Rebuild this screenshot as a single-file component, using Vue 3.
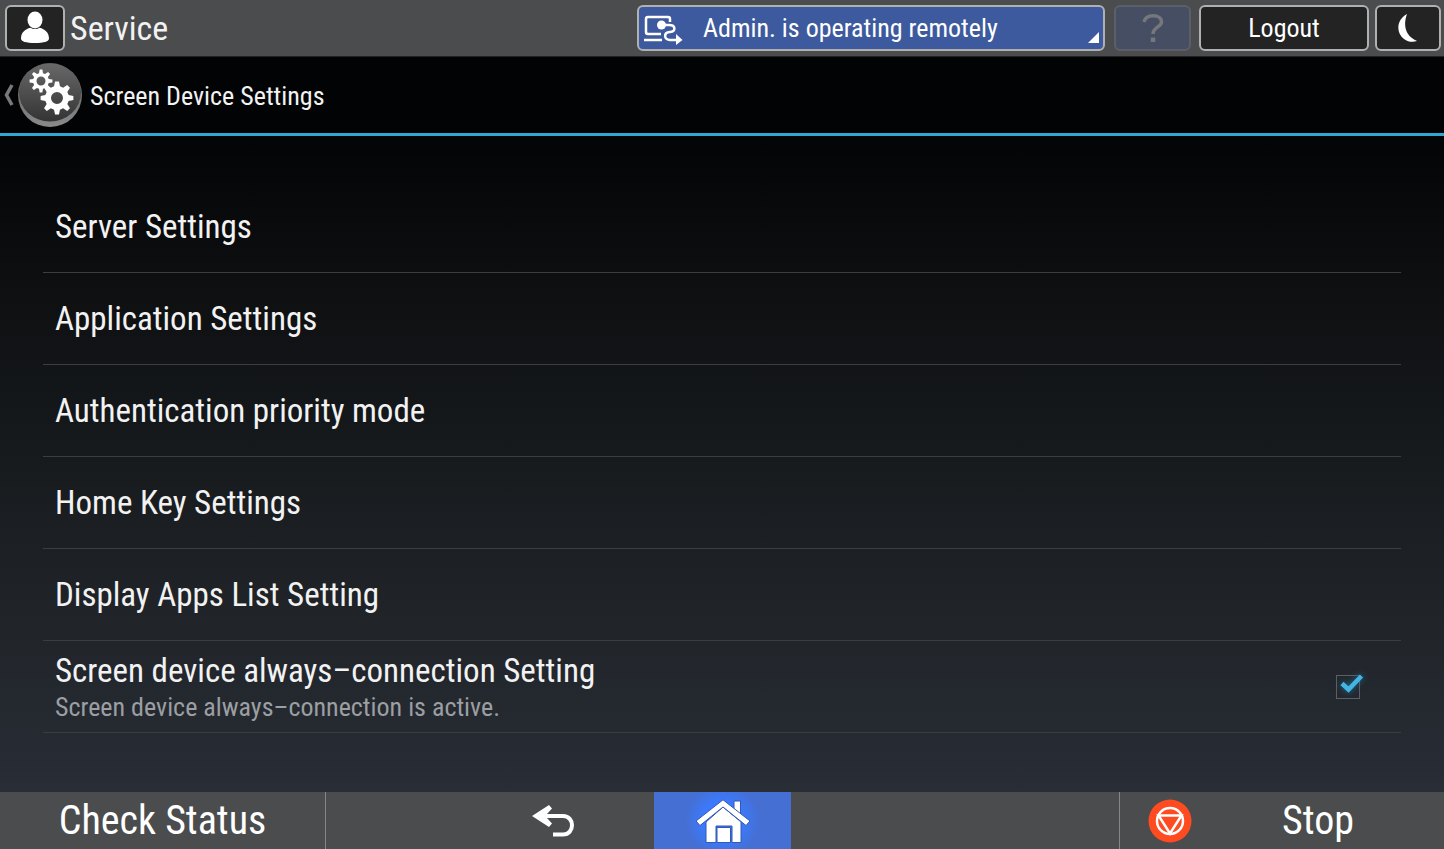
<template>
  <div class="panel">
    <header class="top-bar">
      <button type="button" class="key user-key" aria-label="User">
        <svg width="30" height="34" viewBox="0 0 30 34" fill="#fff">
          <ellipse cx="15" cy="9" rx="7.5" ry="8.5" />
          <path d="M15 18c2 0 3.200-.6 4.500-1.300C25 18 29 21.500 29 27.500C29 30.500 24 32 15 32S1 30.500 1 27.500C1 21.500 5 18 10.500 16.700C11.800 17.400 13 18 15 18z" />
        </svg>
      </button>
      <span class="user-name">Service</span>
      <button type="button" class="key remote-key">
        <svg class="remote-icon" width="40" height="34" viewBox="0 0 40 34" fill="none" stroke="#fff" stroke-width="2.500">
          <path d="M18 23H5Q3 23 3 21V8Q3 6 5 6H25Q27 6 27 8V11" />
          <path d="M1 29H19" />
          <path d="M18 14H26C33 14 33 20.500 27 21C20 21.500 21 29 27 29H34" />
          <circle cx="18.500" cy="14" r="4.500" fill="#fff" stroke="none" />
          <path d="M33 23L39.500 29L33 34z" fill="#fff" stroke="none" />
        </svg>
        <span class="remote-text">Admin. is operating remotely</span>
        <svg class="remote-corner" width="11" height="11" viewBox="0 0 11 11" fill="#fff"><path d="M11 0V11H0z" /></svg>
      </button>
      <button type="button" class="key help-key" disabled aria-label="Help">
        <svg width="22" height="28" viewBox="0 0 22 28" fill="none" stroke="#75777c" stroke-width="3.500">
          <path d="M2 8C3 3.500 6.500 1.800 11 1.800C16 1.800 19.500 4 19.500 8C19.500 13 11 13 11 20" />
          <path d="M11 23.500V28" stroke-width="4.500" />
        </svg>
      </button>
      <button type="button" class="key logout-key">Logout</button>
      <button type="button" class="key sleep-key" aria-label="Sleep">
        <svg width="20" height="30" viewBox="0 0 20 30" fill="#fff">
          <path d="M9 1C-2 7 -2 20 6 26C10 29 15 29.500 19 28C7 23 5 12 9 1z" />
        </svg>
      </button>
    </header>

    <nav class="title-bar">
      <a href="#" class="back-link" aria-label="Back to settings">
        <svg width="10" height="22" viewBox="0 0 10 22" fill="none" stroke="#77797a" stroke-width="3.500">
          <path d="M8 1L2.500 11L8 21" />
        </svg>
        <svg width="66" height="66" viewBox="0 0 66 66">
          <defs>
            <linearGradient id="disc" x1="0" y1="0" x2="0" y2="1">
              <stop offset="0" stop-color="#686868" />
              <stop offset="1" stop-color="#343434" />
            </linearGradient>
            <linearGradient id="rim" x1="0" y1="0" x2="0" y2="1">
              <stop offset="0" stop-color="#555" />
              <stop offset="1" stop-color="#8a8a8a" />
            </linearGradient>
          </defs>
          <circle cx="33" cy="33" r="32" fill="url(#rim)" />
          <ellipse cx="33" cy="30.500" rx="31" ry="29" fill="url(#disc)" />
          <path v-for="gear in gears" :key="gear" :d="gear" fill="#fff" fill-rule="evenodd" />
        </svg>
      </a>
      <h1 class="title">Screen Device Settings</h1>
    </nav>

    <main class="content">
      <ul class="settings">
        <li v-for="item in items" :key="item" class="row">
          <a href="#" class="row-link">{{ item }}</a>
        </li>
        <li class="row">
          <label class="row-text" for="always-connection">
            <span class="row-name">Screen device always–connection Setting</span>
            <span class="row-note">Screen device always–connection is {{ connected ? 'active' : 'inactive' }}.</span>
          </label>
          <span class="check">
            <input id="always-connection" v-model="connected" type="checkbox" class="check-box" />
            <svg v-if="connected" class="check-mark" width="24" height="20" viewBox="0 0 24 20" fill="none" stroke="#42b5e4" stroke-width="4.500">
              <path d="M2 9.500L8.500 15.500L21.500 2" />
            </svg>
          </span>
        </li>
      </ul>
    </main>

    <footer class="bottom-bar">
      <button type="button" class="bar-key status-key">Check Status</button>
      <div class="bar-middle">
        <button type="button" class="bar-key return-key" aria-label="Return">
          <svg width="44" height="34" viewBox="0 0 44 34">
            <path d="M15 12H32C44 12 44 30.500 32 30.500H22" fill="none" stroke="#fff" stroke-width="4" />
            <path d="M1 12L18 1L21 4.500L16 10V14L21 19.500L18 23z" fill="#fff" />
          </svg>
        </button>
        <button type="button" class="bar-key home-key" aria-label="Home">
          <svg width="54" height="44" viewBox="0 0 54 44" fill="#fff" stroke="#3158b5" stroke-width="1">
            <path d="M38 13V2H44.500V18.500z" />
            <path d="M10 23L27 8L45 23V43.500H36V27H20V43.500H10z" />
            <path d="M27 .8L54 22L50 26.500L27 8L4 26.500L0 22z" />
            <path d="M21 28.500H34.500V43.500H21z" />
          </svg>
        </button>
      </div>
      <button type="button" class="bar-key stop-key">
        <svg width="44" height="44" viewBox="0 0 44 44" fill="none" stroke="#fff" stroke-width="2.500">
          <circle cx="22" cy="22" r="21.500" fill="#ff4b20" stroke="none" />
          <circle cx="22" cy="22" r="13" />
          <path d="M10.500 16.500H33.500L22 34.500z" />
        </svg>
        <span class="stop-text">Stop</span>
      </button>
    </footer>
  </div>
</template>

<script setup>
import { ref } from 'vue'

const connected = ref(true)

const items = [
  'Server Settings',
  'Application Settings',
  'Authentication priority mode',
  'Home Key Settings',
  'Display Apps List Setting'
]

// eight-toothed wheel with a round hole
function gearPath(cx, cy, outer, root, hole) {
  const points = []
  for (let i = 0; i < 8; i++) {
    const steps = [[-0.25, root], [-0.12, outer], [0.12, outer], [0.25, root]]
    for (const [offset, r] of steps) {
      const a = (i * Math.PI) / 4 + offset
      points.push(`${(cx + r * Math.cos(a)).toFixed(2)} ${(cy + r * Math.sin(a)).toFixed(2)}`)
    }
  }
  const ring = `M${cx - hole} ${cy}a${hole} ${hole} 0 1 0 ${hole * 2} 0a${hole} ${hole} 0 1 0 ${-hole * 2} 0z`
  return `M${points.join('L')}z${ring}`
}

const gears = [
  gearPath(24, 19, 11.5, 8, 4.5),
  gearPath(40, 36, 16.5, 12, 6)
]
</script>

<style>
body {
  margin: 0;
  background: #282d36;
}
</style>

<style scoped>
.panel {
  display: flex;
  flex-direction: column;
  min-height: 100vh;
  box-sizing: border-box;
  color: #f2f2f2;
  font-family: "Roboto Condensed", Roboto, sans-serif;
}

button {
  font-family: inherit;
  color: #fff;
  padding: 0;
  cursor: pointer;
}

svg {
  display: block;
  flex: none;
}

.top-bar {
  display: flex;
  align-items: center;
  height: 56px;
  padding: 0 3px 0 5px;
  background: #4b4c4d;
  border-bottom: 1px solid #222;
}

.key {
  display: flex;
  align-items: center;
  justify-content: center;
  box-sizing: border-box;
  height: 46px;
  border: 2px solid #b0b0b0;
  border-radius: 6px;
  background: #232323;
  font-size: 26px;
}

.user-key {
  width: 60px;
}

.user-name {
  margin-left: 5px;
  margin-right: auto;
  font-size: 34px;
}

.remote-key {
  position: relative;
  width: 468px;
  padding-left: 4px;
  justify-content: flex-start;
  background: #3d5a9e;
}

.remote-text {
  margin-left: 20px;
}

.remote-corner {
  position: absolute;
  right: 4px;
  bottom: 6px;
}

.help-key {
  width: 77px;
  margin-left: 9px;
  border-color: #5b6068;
  background: #464e63;
}

.logout-key {
  width: 170px;
  margin-left: 8px;
}

.sleep-key {
  width: 66px;
  margin-left: 6px;
}

.title-bar {
  display: flex;
  align-items: center;
  height: 76px;
  padding-left: 4px;
  background: #020304;
  border-bottom: 3px solid #2fa8d4;
}

.back-link {
  display: flex;
  align-items: center;
  gap: 3px;
}

.title {
  margin: 0 0 0 7px;
  padding-top: 2px;
  font-size: 26px;
  font-weight: 400;
}

.content {
  flex: 1;
  padding: 45px 43px 58px;
  background: linear-gradient(#030405, #0e1012 25%, #1f2327 70%, #282d36);
}

.settings {
  margin: 0;
  padding: 0;
  list-style: none;
}

.row {
  display: flex;
  align-items: center;
  justify-content: space-between;
  height: 91px;
  border-bottom: 1px solid #3b3e41;
}

.row-link {
  flex: 1;
  padding-left: 12px;
  line-height: 91px;
  color: inherit;
  text-decoration: none;
}

.row-link,
.row-name {
  font-size: 33px;
}

.row-text {
  display: flex;
  flex-direction: column;
  padding-left: 12px;
}

.row-name {
  line-height: 40px;
}

.row-note {
  font-size: 26px;
  line-height: 32px;
  color: #9c9fa2;
}

.check {
  position: relative;
  margin-right: 41px;
}

.check-box {
  display: block;
  appearance: none;
  box-sizing: border-box;
  width: 24px;
  height: 24px;
  margin: 0;
  border: 1px solid #5c6064;
}

.check-mark {
  position: absolute;
  left: 4px;
  top: -1px;
  pointer-events: none;
  filter: drop-shadow(0 0 3px #1c6f94);
}

.bottom-bar {
  display: flex;
  height: 57px;
  background: #4b4c4d;
}

.bar-key {
  display: flex;
  align-items: center;
  justify-content: center;
  border: 0;
  background: none;
  font-size: 40px;
}

.status-key {
  width: 325px;
}

.bar-middle {
  flex: 1;
  display: grid;
  grid-template-columns: 1fr 137px 1fr;
  border: solid #85878a;
  border-width: 0 1px;
}

.return-key {
  justify-self: end;
  width: 202px;
}

.home-key {
  background: radial-gradient(circle, #3b7aff 25%, #456fd2 50%);
}

.stop-key {
  width: 324px;
  justify-content: flex-start;
  padding-left: 28px;
}

.stop-text {
  margin-left: 90px;
}
</style>
